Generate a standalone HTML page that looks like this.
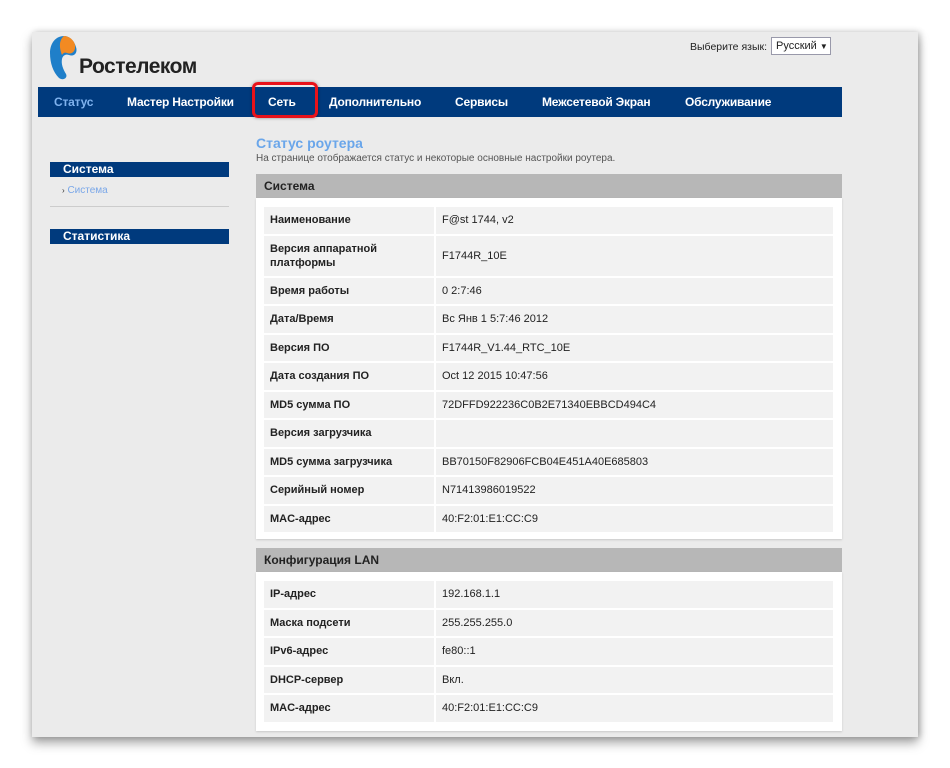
<!DOCTYPE html>
<html><head><meta charset="utf-8"><style>
*{margin:0;padding:0;box-sizing:border-box}
body{width:950px;height:768px;background:#fff;font-family:"Liberation Sans",Arial,sans-serif;position:relative;overflow:hidden}
#page{position:absolute;left:32px;top:32px;width:886px;height:705px;background:#ebebeb;box-shadow:0 6px 10px rgba(0,0,0,.35),2px 0 6px rgba(0,0,0,.2)}
.abs{position:absolute}
#nav{left:38px;top:87px;width:804px;height:30px;background:#003a7d}
#nav span{position:absolute;top:8px;color:#fff;font-weight:bold;font-size:12px;letter-spacing:-0.2px}
.side{left:50px;width:179px;height:15px;background:#003a7d;color:#fff;font-weight:bold;font-size:12px;padding-left:13px;line-height:15px}
.hdr{left:256px;width:586px;height:24px;background:#b7b7b7;font-size:12px;font-weight:bold;color:#222;padding-left:8px;line-height:24px}
.panel{left:256px;width:586px;background:#fff;box-shadow:0 1px 2px rgba(0,0,0,.15)}
table{border-spacing:2px 2.5px;margin:7px 0 0 6px;width:573px;font-size:11px;color:#222}
td{background:#f2f2f2;height:26.5px;padding:0 6px}
td.l{width:170px;font-weight:bold}
</style></head><body>
<div id="page"></div>
<svg class="abs" style="left:46px;top:34px" width="34" height="48" viewBox="0 0 32 48">
<path d="M17 2C9 2 3 9 3 19c0 10 3 19 9 25 4 3 9 0 7-4-3-5-5-10-4-15 1-4 4-5 7-4 5 2 9-2 7-8C27 6 22 2 17 2z" fill="#1f7fc9"/>
<path d="M17 2c5 0 10 4 11 9 1 6-3 10-8 8-2-1-4 0-5 2C12 13 12 6 17 2z" fill="#f28a22"/>
</svg>
<div class="abs" style="left:79px;top:55px;font-size:21px;font-weight:bold;color:#222;letter-spacing:-0.5px">Ростелеком</div>
<div class="abs" style="left:690px;top:41px;font-size:10.5px;color:#222;white-space:nowrap">Выберите язык:</div>
<div class="abs" style="left:771px;top:37px;width:60px;height:18px;border:1px solid #99a;background:#fff;font-size:11px;padding:2px 4px;color:#222;white-space:nowrap">Русский <span style="font-size:8px">▼</span></div>
<div id="nav" class="abs">
<span style="left:16px;color:#7fb2ee">Статус</span>
<span style="left:89px">Мастер Настройки</span>
<span style="left:230px">Сеть</span>
<span style="left:291px">Дополнительно</span>
<span style="left:417px">Сервисы</span>
<span style="left:504px">Межсетевой Экран</span>
<span style="left:647px">Обслуживание</span>
</div>
<div class="abs" style="left:252px;top:82px;width:66px;height:36px;border:3px solid #e8121a;border-radius:6px;box-shadow:0 0 3px rgba(0,0,0,.4)"></div>
<div class="abs side" style="top:162px">Система</div>
<div class="abs" style="left:62px;top:185px;font-size:10px;color:#7aa7e8"><span style="color:#333;font-size:8px">›</span> Система</div>
<div class="abs" style="left:50px;top:206px;width:179px;height:1px;background:#ccc"></div>
<div class="abs side" style="top:229px">Статистика</div>
<div class="abs" style="left:256px;top:135px;font-size:14px;font-weight:bold;color:#6aa6ea">Статус роутера</div>
<div class="abs" style="left:256px;top:153px;font-size:10px;color:#555">На странице отображается статус и некоторые основные настройки роутера.</div>
<div class="abs hdr" style="top:174px">Система</div>
<div class="abs panel" style="top:198px;height:341px"><table>
<tr><td class="l">Наименование</td><td>F@st 1744, v2</td></tr>
<tr><td class="l" style="height:40px;line-height:14px">Версия аппаратной платформы</td><td>F1744R_10E</td></tr>
<tr><td class="l">Время работы</td><td>0 2:7:46</td></tr>
<tr><td class="l">Дата/Время</td><td>Вс Янв 1 5:7:46 2012</td></tr>
<tr><td class="l">Версия ПО</td><td>F1744R_V1.44_RTC_10E</td></tr>
<tr><td class="l">Дата создания ПО</td><td>Oct 12 2015 10:47:56</td></tr>
<tr><td class="l">MD5 сумма ПО</td><td>72DFFD922236C0B2E71340EBBCD494C4</td></tr>
<tr><td class="l">Версия загрузчика</td><td></td></tr>
<tr><td class="l">MD5 сумма загрузчика</td><td>BB70150F82906FCB04E451A40E685803</td></tr>
<tr><td class="l">Серийный номер</td><td>N71413986019522</td></tr>
<tr><td class="l">MAC-адрес</td><td>40:F2:01:E1:CC:C9</td></tr>
</table></div>
<div class="abs hdr" style="top:548px">Конфигурация LAN</div>
<div class="abs panel" style="top:572px;height:159px"><table>
<tr><td class="l">IP-адрес</td><td>192.168.1.1</td></tr>
<tr><td class="l">Маска подсети</td><td>255.255.255.0</td></tr>
<tr><td class="l">IPv6-адрес</td><td>fe80::1</td></tr>
<tr><td class="l">DHCP-сервер</td><td>Вкл.</td></tr>
<tr><td class="l">MAC-адрес</td><td>40:F2:01:E1:CC:C9</td></tr>
</table></div>
</body></html>
